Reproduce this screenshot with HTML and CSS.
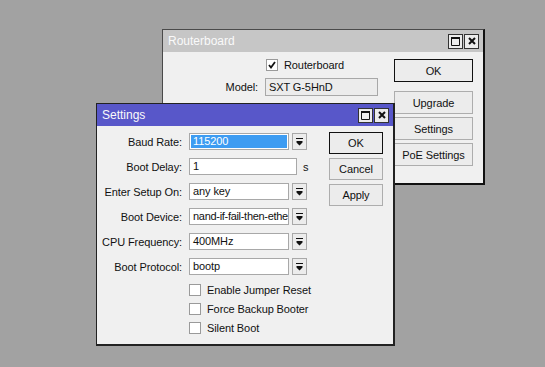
FILE: index.html
```html
<!DOCTYPE html>
<html lang="en">
<head>
    <meta charset="UTF-8">
    <meta name="viewport" content="width=device-width, initial-scale=1.0">
    <title>Routerboard - Settings</title>
    <link rel="stylesheet" href="styles.css">
</head>
<body>
    <div class="desktop">

        <!-- back window -->
        <div class="window routerboard">
            <div class="titlebar inactive">
                <span class="title">Routerboard</span>
                <div class="title-buttons">
                    <span class="tbtn"><svg width="9" height="9" viewBox="0 0 9 9"><path d="M0.5 0.5h8v8h-8z" fill="none" stroke="#111"/><path d="M0 0h9v2H0z" fill="#111"/></svg></span>
                    <span class="tbtn"><svg width="8" height="8" viewBox="0 0 8 8"><path d="M1 1L7 7M7 1L1 7" stroke="#111" stroke-width="2"/></svg></span>
                </div>
            </div>
            <div class="rb-body">
                <div class="rb-fields">
                    <span></span>
                    <label class="check">
                        <span class="box"><svg width="10" height="10" viewBox="0 0 10 10"><path d="M2 5l2 2.5L8 2" fill="none" stroke="#111" stroke-width="1.8"/></svg></span>
                        Routerboard
                    </label>
                    <span class="lbl">Model:</span>
                    <div class="field readonly">SXT G-5HnD</div>
                </div>
                <div class="btn-col">
                    <button class="btn default">OK</button>
                    <button class="btn spaced">Upgrade</button>
                    <button class="btn">Settings</button>
                    <button class="btn">PoE Settings</button>
                </div>
            </div>
        </div>

        <!-- front window -->
        <div class="window settings">
            <div class="titlebar active">
                <span class="title">Settings</span>
                <div class="title-buttons">
                    <span class="tbtn"><svg width="9" height="9" viewBox="0 0 9 9"><path d="M0.5 0.5h8v8h-8z" fill="none" stroke="#111"/><path d="M0 0h9v2H0z" fill="#111"/></svg></span>
                    <span class="tbtn"><svg width="8" height="8" viewBox="0 0 8 8"><path d="M1 1L7 7M7 1L1 7" stroke="#111" stroke-width="2"/></svg></span>
                </div>
            </div>
            <div class="st-body">
                <div class="st-form">
                    <div class="row">
                        <span class="lbl">Baud Rate:</span>
                        <div class="field selected">115200</div>
                        <span class="drop"><svg width="7" height="8" viewBox="0 0 7 8"><path d="M0 0h7v1H0z M0.5 3h6v1.5L3.5 7.5L0.5 4.5z" fill="#111"/></svg></span>
                    </div>
                    <div class="row">
                        <span class="lbl">Boot Delay:</span>
                        <div class="field wide">1</div>
                        <span class="unit">s</span>
                    </div>
                    <div class="row">
                        <span class="lbl">Enter Setup On:</span>
                        <div class="field">any key</div>
                        <span class="drop"><svg width="7" height="8" viewBox="0 0 7 8"><path d="M0 0h7v1H0z M0.5 3h6v1.5L3.5 7.5L0.5 4.5z" fill="#111"/></svg></span>
                    </div>
                    <div class="row">
                        <span class="lbl">Boot Device:</span>
                        <div class="field clip">nand-if-fail-then-ethe</div>
                        <span class="drop"><svg width="7" height="8" viewBox="0 0 7 8"><path d="M0 0h7v1H0z M0.5 3h6v1.5L3.5 7.5L0.5 4.5z" fill="#111"/></svg></span>
                    </div>
                    <div class="row">
                        <span class="lbl">CPU Frequency:</span>
                        <div class="field">400MHz</div>
                        <span class="drop"><svg width="7" height="8" viewBox="0 0 7 8"><path d="M0 0h7v1H0z M0.5 3h6v1.5L3.5 7.5L0.5 4.5z" fill="#111"/></svg></span>
                    </div>
                    <div class="row">
                        <span class="lbl">Boot Protocol:</span>
                        <div class="field">bootp</div>
                        <span class="drop"><svg width="7" height="8" viewBox="0 0 7 8"><path d="M0 0h7v1H0z M0.5 3h6v1.5L3.5 7.5L0.5 4.5z" fill="#111"/></svg></span>
                    </div>
                    <div class="checks">
                        <label class="check"><span class="box"></span>Enable Jumper Reset</label>
                        <label class="check"><span class="box"></span>Force Backup Booter</label>
                        <label class="check"><span class="box"></span>Silent Boot</label>
                    </div>
                </div>
                <div class="btn-col">
                    <button class="btn default">OK</button>
                    <button class="btn">Cancel</button>
                    <button class="btn">Apply</button>
                </div>
            </div>
        </div>

    </div>
</body>
</html>
```

FILE: styles.css
```css
body {
    margin: 0;
    font-family: "Liberation Sans", Arial, sans-serif;
    font-size: 11px;
    letter-spacing: -0.1px;
    color: #111;
}

.desktop {
    position: relative;
    width: 545px;
    height: 367px;
    background-color: #a2a2a2;
    overflow: hidden;
}

/* windows */
.window {
    position: absolute;
    box-sizing: border-box;
    background-color: #f0f0f0;
    border: 1px solid #4a4a4a;
    border-right: 2px solid #111;
    border-bottom: 2px solid #111;
}

.routerboard {
    left: 162px;
    top: 29px;
    width: 323px;
    height: 156px;
}

.settings {
    left: 96px;
    top: 103px;
    width: 299px;
    height: 243px;
    border-color: #222;
}

.titlebar {
    height: 22px;
    display: flex;
    align-items: center;
    justify-content: space-between;
    padding: 0 4px 0 5px;
}

.titlebar.inactive {
    background-color: #c6c6c6;
}

.titlebar.active {
    background-color: #5857c9;
}

.title {
    color: #fafafa;
    font-size: 12px;
    letter-spacing: 0;
}

.title-buttons {
    display: flex;
    gap: 1px;
}

.tbtn {
    width: 15px;
    height: 15px;
    box-sizing: border-box;
    border: 1px solid #333;
    background-color: #ececec;
    display: flex;
    align-items: center;
    justify-content: center;
}

/* shared controls */
.lbl {
    text-align: right;
    white-space: nowrap;
}

.field {
    box-sizing: border-box;
    height: 17px;
    border: 1px solid #a8a8a8;
    background-color: #fff;
    padding: 0 3px;
    line-height: 15px;
    white-space: nowrap;
}

.field.clip {
    padding-right: 0;
    letter-spacing: -0.3px;
}

.field.readonly {
    height: 18px;
    line-height: 16px;
    background-color: #ececec;
}

.field.selected {
    background-color: #3d9cf2;
    color: #fff;
    box-shadow: inset 0 0 0 1px #fff;
}

.drop {
    box-sizing: border-box;
    width: 15px;
    height: 17px;
    border: 1px solid #a8a8a8;
    background-color: #ececec;
    display: flex;
    align-items: center;
    justify-content: center;
}

.check {
    display: flex;
    align-items: center;
    gap: 6px;
    white-space: nowrap;
}

.box {
    box-sizing: border-box;
    width: 12px;
    height: 12px;
    border: 1px solid #9a9a9a;
    background-color: #fff;
    display: flex;
    align-items: center;
    justify-content: center;
}

.btn-col {
    display: flex;
    flex-direction: column;
    gap: 4px;
}

.btn {
    box-sizing: border-box;
    height: 22px;
    padding: 0;
    font-family: inherit;
    font-size: 11px;
    letter-spacing: -0.1px;
    color: #111;
    background-color: #ececec;
    border: 1px solid #adadad;
}

.btn.default {
    border-color: #111;
}

/* routerboard window */
.rb-body {
    display: flex;
    align-items: flex-start;
    padding: 6px 10px 0 0;
    gap: 16px;
}

.rb-fields {
    display: grid;
    grid-template-columns: 95px 113px;
    column-gap: 7px;
    row-gap: 6px;
    align-items: center;
    align-content: start;
}

.rb-fields .check {
    height: 14px;
    margin-left: 1px;
}

.routerboard .btn-col {
    width: 79px;
    margin-top: 1px;
    gap: 3px;
}

.routerboard .btn {
    height: 23px;
}

.routerboard .btn.spaced {
    margin-top: 6px;
}

/* settings window */
.st-body {
    display: flex;
    align-items: flex-start;
    padding: 6px 10px 0 0;
    gap: 18px;
}

.st-form {
    padding-top: 1px;
}

.row {
    display: flex;
    align-items: center;
    height: 17px;
    margin-bottom: 8px;
}

.row .lbl {
    width: 85px;
    margin-right: 7px;
}

.row .field {
    width: 100px;
    margin-right: 3px;
}

.row .field.wide {
    width: 108px;
    margin-right: 6px;
}

.checks {
    padding-left: 92px;
    margin-top: -3px;
}

.checks .check {
    height: 19px;
}

.settings .btn-col {
    width: 58px;
}
```
